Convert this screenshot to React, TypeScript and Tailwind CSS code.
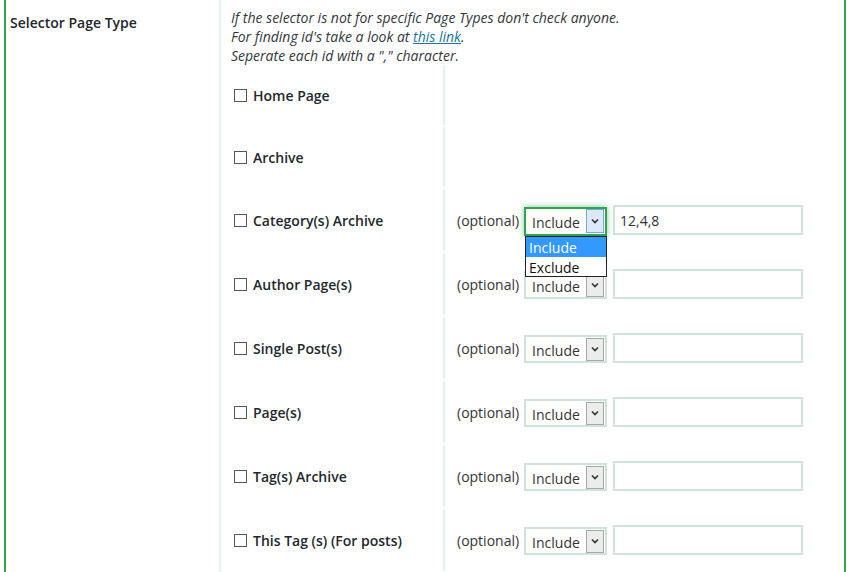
import React from 'react';

const rows = [
  { label: 'Home Page', opts: false },
  { label: 'Archive', opts: false },
  { label: 'Category(s) Archive', opts: true, open: true, value: '12,4,8' },
  { label: 'Author Page(s)', opts: true },
  { label: 'Single Post(s)', opts: true },
  { label: 'Page(s)', opts: true },
  { label: 'Tag(s) Archive', opts: true },
  { label: 'This Tag (s) (For posts)', opts: true },
];

function Chevron() {
  return (
    <svg width="8" height="6" viewBox="0 0 8 6">
      <path d="M1 1.5 L4 4.5 L7 1.5" fill="none" stroke="#333" strokeWidth="1.6" />
    </svg>
  );
}

function FakeSelect({ open }: { open?: boolean }) {
  return (
    <div className="relative mt-[2px]">
      <div
        className={
          open
            ? 'flex h-[29px] w-[83px] items-center border-2 border-[#2ea44f] bg-white pl-[6px] pr-[1px] shadow-[0_0_6px_rgba(46,164,79,0.6)]'
            : 'flex h-[28px] w-[83px] items-center border-2 border-[#cfe4d7] bg-white pl-[6px] pr-[1px]'
        }
      >
        <span className="flex-1 pt-[3px] text-[14px] leading-[18px] text-[#333]">Include</span>
        <span
          className={
            open
              ? 'flex h-[24px] w-[18px] items-center justify-center border border-[#7aa7d8] bg-[#dde9f8]'
              : 'flex h-[23px] w-[18px] items-center justify-center border border-[#a6a6a6] bg-[#ececec]'
          }
        >
          <Chevron />
        </span>
      </div>
      {open && (
        <div className="absolute left-[1px] top-[29px] z-10 w-[82px] border border-[#222] bg-white text-[14px] leading-[19px]">
          <div className="h-[20px] bg-[#3399ff] pl-[3px] pt-[1px] text-white">Include</div>
          <div className="h-[19px] pl-[3px] pt-[1px] text-[#111]">Exclude</div>
        </div>
      )}
    </div>
  );
}

export default function App() {
  return (
    <div className="min-h-[572px] bg-white font-['Open_Sans',sans-serif] text-[#23282d]">
      <div className="ml-[4px] mr-[3px] flex min-h-[572px] border-x-2 border-[#2ea44f]">
        {/* label column */}
        <div className="w-[213px] shrink-0 pl-[4px] pt-[12px] text-[14px] font-semibold">
          Selector Page Type
        </div>

        {/* field column */}
        <div className="flex-1 border-l-2 border-[#e3f4ec]">
          <div className="pl-[10px] pt-[8px] text-[14px] italic leading-[19px] text-[#32373c]">
            <p>If the selector is not for specific Page Types don't check anyone.</p>
            <p>
              For finding id's take a look at{' '}
              <a href="#" className="text-[#21759b] underline">this link</a>.
            </p>
            <p>Seperate each id with a "," character.</p>
          </div>

          <div className="flex flex-col gap-[2px]">
            {rows.map((r) => (
              <div key={r.label} className={r.opts ? 'flex h-[62px]' : 'flex h-[60px]'}>
                <div className="flex w-[222px] shrink-0 items-center pl-[13px] text-[14px] font-semibold">
                  <span className="mr-[6px] h-[13px] w-[13px] border border-[#555] bg-white" />
                  {r.label}
                </div>
                <div className="flex flex-1 items-center border-l-2 border-[#e0f3e9] pl-[12px] text-[14px]">
                  {r.opts && (
                    <>
                      <span className="mr-[5px] text-[#333]">(optional)</span>
                      <FakeSelect open={r.open} />
                      <div className="ml-[6px] flex h-[30px] w-[190px] items-center border-2 border-[#cfe4d7] bg-white pl-[5px] text-[14px] text-[#333]">
                        {r.value ?? ''}
                      </div>
                    </>
                  )}
                </div>
              </div>
            ))}
          </div>
        </div>
      </div>
    </div>
  );
}
